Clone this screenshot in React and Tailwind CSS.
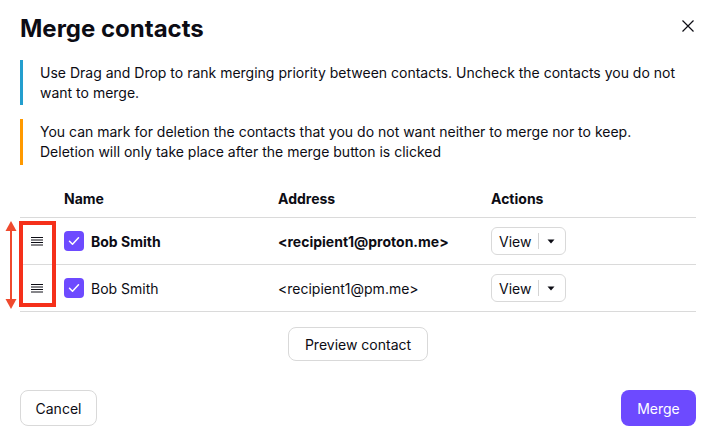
const DragHandle = () => (
    <svg width="12" height="10" viewBox="0 0 12 10" className="text-[#0c0c14]">
        <path d="M0 1.5h12M0 4h12M0 6.5h12M0 9h12" stroke="currentColor" strokeWidth="1" />
    </svg>
)

const Checked = () => (
    <span className="w-5 h-5 rounded-[4px] bg-[#6d4aff] flex items-center justify-center shrink-0">
        <svg width="12" height="10" viewBox="0 0 12 10">
            <path d="M1.5 5.2l3 3L10.5 1.8" fill="none" stroke="white" strokeWidth="1.5" strokeLinecap="round" strokeLinejoin="round" />
        </svg>
    </span>
)

const ViewButton = () => (
    <div className="h-[28px] w-[75px] border border-[#d9d9d9] rounded-[6px] flex items-center text-[14px]">
        <span className="pl-[7px] pr-[7px]">View</span>
        <span className="w-px h-[16px] bg-[#d4d4d4]"></span>
        <span className="flex-1 flex justify-center pr-[2px]">
            <svg width="8" height="5" viewBox="0 0 8 5"><path d="M0.5 0.5h7L4 4.5z" fill="#0c0c14" /></svg>
        </span>
    </div>
)

const Row = ({ bold, address }) => (
    <div className="flex items-center h-[47px] border-b border-[#dadada] text-[14px]">
        <div className="w-[44px] flex pl-[11px]"><DragHandle /></div>
        <div className="w-[214px] flex items-center gap-[7px]">
            <Checked />
            <span className={bold ? "font-bold" : ""}>Bob Smith</span>
        </div>
        <div className={"w-[213px] " + (bold ? "font-bold" : "")}>{address}</div>
        <div className="flex-1"><ViewButton /></div>
    </div>
)

const App = () => {
    return (
        <div className="w-[718px] h-[445px] bg-white relative pl-5 pr-[22px] font-['Inter','Noto_Sans',sans-serif] text-[#0c0c14] overflow-hidden">
            <div className="flex items-start justify-between pt-[13px]">
                <h1 className="text-[24px] leading-8 font-bold">Merge contacts</h1>
                <div className="mt-[7px] mr-[2px]">
                    <svg width="12" height="12" viewBox="0 0 12 12">
                        <path d="M0.5 0.5l11 11M11.5 0.5l-11 11" stroke="#0c0c14" strokeWidth="1.2" />
                    </svg>
                </div>
            </div>

            <div className="mt-[15px] border-l-[3px] border-[#239ece] pl-[17px] pt-[3px] pb-[2px] text-[14px] leading-5">
                Use Drag and Drop to rank merging priority between contacts. Uncheck the contacts you do not<br />want to merge.
            </div>
            <div className="mt-[14px] border-l-[3px] border-[#ff9900] pl-[17px] pt-[3px] pb-[3px] text-[14px] leading-5">
                You can mark for deletion the contacts that you do not want neither to merge nor to keep.<br />Deletion will only take place after the merge button is clicked
            </div>

            <div className="mt-[14px]">
                <div className="flex items-center h-[39px] border-b border-[#dadada] text-[14px] font-bold">
                    <div className="w-[44px]"></div>
                    <div className="w-[214px]">Name</div>
                    <div className="w-[213px]">Address</div>
                    <div className="flex-1">Actions</div>
                </div>
                <Row bold address="<recipient1@proton.me>" />
                <Row address="<recipient1@pm.me>" />
            </div>

            <div className="flex justify-center mt-[15px]">
                <button className="h-[34px] px-4 border border-[#d9d9d9] rounded-lg text-[14px]">Preview contact</button>
            </div>

            <div className="flex justify-between mt-[29px]">
                <button className="h-9 w-[77px] border border-[#d9d9d9] rounded-lg text-[14px]">Cancel</button>
                <button className="h-9 w-[75px] bg-[#6d4aff] text-white rounded-lg text-[14px]">Merge</button>
            </div>

            {/* annotation overlay */}
            <div className="absolute left-[19px] top-[221px] w-[37px] h-[86px] border-4 border-[#f5301a]"></div>
            <svg className="absolute left-[5px] top-[221px]" width="12" height="88" viewBox="0 0 12 88">
                <path d="M6 6v76" stroke="#ef4a2e" strokeWidth="2" />
                <path d="M6 0L11.5 10H0.5z" fill="#ef4a2e" />
                <path d="M6 88L11.5 78H0.5z" fill="#ef4a2e" />
            </svg>
        </div>
    )
}

export default App;
